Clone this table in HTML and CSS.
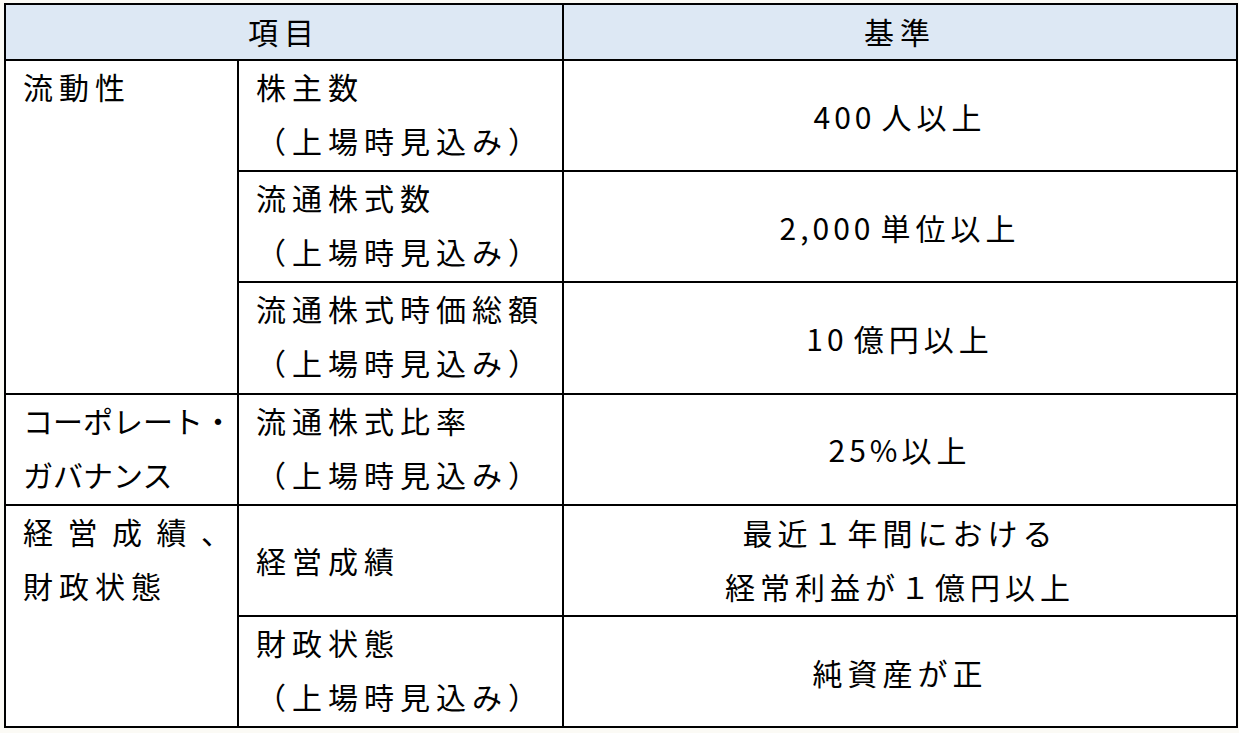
FILE: index.html
```html
<!DOCTYPE html>
<html lang="ja">
<head>
<meta charset="utf-8">
<title>上場基準</title>
<link rel="stylesheet" href="styles.css">
</head>
<body>
<table class="criteria">
  <colgroup>
    <col class="c1">
    <col class="c2">
    <col class="c3">
  </colgroup>
  <thead>
    <tr class="head">
      <th colspan="2">項目</th>
      <th>基準</th>
    </tr>
  </thead>
  <tbody>
    <tr>
      <td class="cat" rowspan="3"><div class="lift">流動性</div></td>
      <td class="item"><div class="lift">株主数<br>（上場時見込み）</div></td>
      <td class="val"><span class="num">400</span>人以上</td>
    </tr>
    <tr>
      <td class="item"><div class="lift">流通株式数<br>（上場時見込み）</div></td>
      <td class="val"><span class="num">2,000</span>単位以上</td>
    </tr>
    <tr>
      <td class="item"><div class="lift">流通株式時価総額<br>（上場時見込み）</div></td>
      <td class="val"><span class="num">10</span>億円以上</td>
    </tr>
    <tr>
      <td class="cat kana"><div class="lift">コーポレート・<br>ガバナンス</div></td>
      <td class="item"><div class="lift">流通株式比率<br>（上場時見込み）</div></td>
      <td class="val"><span class="digits">25%</span>以上</td>
    </tr>
    <tr>
      <td class="cat" rowspan="2"><div class="lift"><span class="just">経営成績、</span>財政状態</div></td>
      <td class="item mid">経営成績</td>
      <td class="val"><div class="lift">最近１年間における<br>経常利益が１億円以上</div></td>
    </tr>
    <tr>
      <td class="item"><div class="lift">財政状態<br>（上場時見込み）</div></td>
      <td class="val">純資産が正</td>
    </tr>
  </tbody>
</table>
</body>
</html>
```

FILE: styles.css
```css
html, body {
  margin: 0;
  padding: 0;
  background: #fbfaf5;
}

body {
  padding: 3px 0 0 4px;
  font-family: "Noto Sans CJK JP", "Noto Sans", sans-serif;
  color: #000;
}

.criteria {
  border-collapse: collapse;
  table-layout: fixed;
  width: 1232px;
  background: #fff;
  font-size: 30px;
  letter-spacing: 6px;
}

.c1 { width: 233px; }
.c2 { width: 325px; }
.c3 { width: 674px; }

.criteria th,
.criteria td {
  border: 2px solid #000;
  padding: 0;
  line-height: 54px;
  font-weight: 400;
}

.head {
  height: 56px;
}

.head th {
  line-height: 50px;
  padding-bottom: 3px;
  background: #dde8f4;
  text-align: center;
  vertical-align: middle;
}

.criteria tbody tr {
  height: 111.2px;
}

.lift {
  margin-top: -2px;
}

.cat {
  vertical-align: top;
  padding-left: 17px !important;
  text-align: left;
}

.cat.kana {
  letter-spacing: 0;
  white-space: nowrap;
}

.just {
  display: block;
  text-align: justify;
  text-align-last: justify;
}

.item {
  vertical-align: top;
  padding-left: 17px !important;
  text-align: left;
  white-space: nowrap;
}

.item.mid {
  vertical-align: middle;
}

.val {
  text-align: center;
  vertical-align: middle;
  letter-spacing: 5px;
}

.num {
  letter-spacing: 4px;
  margin-right: 6px;
}

.digits {
  letter-spacing: 4px;
}
```
